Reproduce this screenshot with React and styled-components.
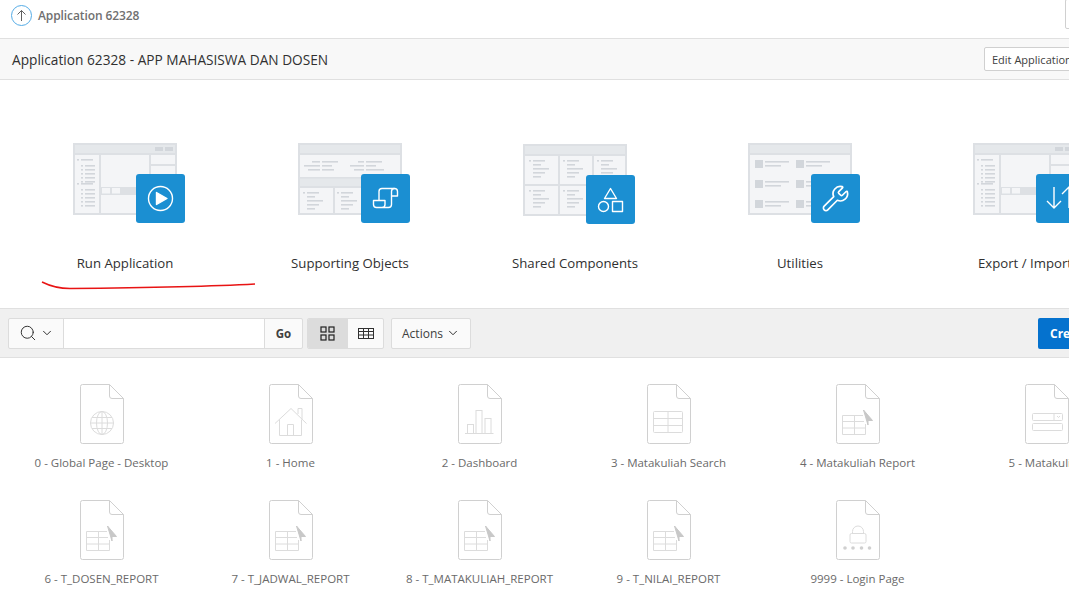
import React from "react";
import styled, { createGlobalStyle } from "styled-components";
import { Search, ChevronDown, Wrench } from "lucide-react";

const Global = createGlobalStyle`
  html, body { margin: 0; padding: 0; overflow: hidden; background: #fff; width: 1069px; height: 591px; }
  * { box-sizing: border-box; }
`;
const Page = styled.div`
  position: relative;
  width: 1150px;
  height: 591px;
  overflow: hidden;
  font-family: "Open Sans", "Noto Sans", sans-serif;
  color: #303030;
`;
const TopBar = styled.div`
  height: 39px;
  display: flex;
  align-items: flex-start;
  justify-content: space-between;
  padding: 0 12px 0 11px;
  border-bottom: 1px solid #e0e0e0;
`;
const Crumb = styled.div`
  display: flex;
  align-items: center;
  gap: 6px;
  height: 30px;
  font-size: 12px;
  font-weight: 600;
  color: #707070;
  letter-spacing: -0.1px;
`;
const UpCircle = styled.span`
  width: 21px;
  height: 21px;
  border: 1px solid #55ace6;
  border-radius: 50%;
  display: flex;
  align-items: center;
  justify-content: center;
`;
const TopButton = styled.div`
  width: 73px;
  height: 30px;
  margin-top: -1px;
  border: 1px solid #d0d0d0;
  border-radius: 2px;
`;
const Header = styled.div`
  height: 41px;
  display: flex;
  align-items: center;
  justify-content: space-between;
  padding: 0 12px;
  background: #f8f8f8;
  border-bottom: 1px solid #e0e0e0;
`;
const Title = styled.h1`
  margin: 1px 0 0;
  font-size: 13.7px;
  font-weight: 400;
  color: #303030;
`;
const EditButton = styled.div`
  height: 24px;
  width: 154px;
  display: flex;
  align-items: center;
  padding: 0 7px;
  white-space: nowrap;
  background: #fff;
  border: 1px solid #d0d0d0;
  border-radius: 2px;
  font-size: 11px;
  color: #404040;
`;
const Hero = styled.div`
  height: 228px;
  padding-top: 63px;
  display: grid;
  grid-template-columns: repeat(5, 225px);
  justify-content: center;
`;
const Tile = styled.div`
  display: flex;
  flex-direction: column;
  align-items: center;
`;
const Art = styled.div`
  position: relative;
  width: 104px;
  height: 80px;
  transform: translateY(${(p) => p.$drop || 0}px);
`;
const Badge = styled.div`
  position: absolute;
  left: 63px;
  top: 31px;
  width: 49px;
  height: 49px;
  border-radius: 3px;
  background: #1b8fd2;
  display: flex;
  align-items: center;
  justify-content: center;
  color: #fff;
`;
const TileLabel = styled.div`
  margin-top: 30px;
  line-height: 20px;
  font-size: 13.2px;
  color: #303030;
  white-space: nowrap;
`;
const Toolbar = styled.div`
  height: 50px;
  padding: 0 8px;
  display: flex;
  align-items: center;
  background: #f0f0f0;
  border-top: 1px solid #e0e0e0;
  border-bottom: 1px solid #e0e0e0;
`;
const Group = styled.div`
  display: flex;
  height: 31px;
  border: 1px solid #dcdcdc;
  border-radius: 2px;
  background: #fafafa;
  margin-right: ${(p) => p.$gap || 0}px;
  overflow: hidden;
`;
const Segment = styled.div`
  width: ${(p) => p.$w}px;
  display: flex;
  align-items: center;
  justify-content: center;
  gap: 3px;
  color: #404040;
  background: ${(p) => (p.$active ? "#dcdcdc" : "transparent")};
  border-left: ${(p) => (p.$sep ? "1px solid #dcdcdc" : "none")};
  font-size: 12px;
`;
const SearchInput = styled.div`
  width: 201px;
  background: #fff;
  border-left: 1px solid #dcdcdc;
`;
const Go = styled(Segment)`
  font-weight: 700;
  font-size: 11.5px;
`;
const Spacer = styled.div`
  flex: 1;
`;
const CreateButton = styled.div`
  width: 104px;
  height: 31px;
  padding-left: 12px;
  display: flex;
  align-items: center;
  background: #0572ce;
  border-radius: 2px;
  color: #fff;
  font-size: 12px;
  font-weight: 700;
  white-space: nowrap;
`;
const PageGrid = styled.div`
  padding: 26px 7px 0;
  display: grid;
  grid-template-columns: repeat(6, 189px);
  grid-auto-rows: 116px;
`;
const PageCell = styled.div`
  display: flex;
  flex-direction: column;
  align-items: center;
`;
const PageLabel = styled.div`
  margin-top: 11px;
  line-height: 16px;
  font-size: 11.5px;
  color: #6a6a6a;
  white-space: nowrap;
`;
const RedMark = styled.svg`
  position: absolute;
  left: 0;
  top: 0;
  pointer-events: none;
`;

const EDGE = "#dde0e4";
const BAND = "#e5e8eb";
const FILL = "#f4f5f7";
const INK = "#d2d6db";

const R = ({ x, y, w, h, c = INK }) => <rect x={x} y={y} width={w} height={h} fill={c} />;

const Frame = ({ children }) => (
  <svg width="104" height="72" viewBox="0 0 104 72" style={{ display: "block" }}>
    <R x={0} y={0} w={104} h={72} c={EDGE} />
    <R x={2} y={2} w={100} h={68} c={FILL} />
    <R x={2} y={2} w={100} h={8} c={BAND} />
    <R x={2} y={10} w={100} h={2} c={EDGE} />
    {children}
  </svg>
);

const RunArt = () => (
  <Frame>
    <R x={82} y={4} w={8} h={4} c={INK} />
    <R x={92} y={4} w={8} h={4} c={INK} />
    <R x={26} y={12} w={2} h={58} c={EDGE} />
    <R x={76} y={12} w={2} h={58} c={EDGE} />
    <R x={78} y={21} w={24} h={2} c={EDGE} />
    <R x={28} y={44} w={48} h={8} c={EDGE} />
    <R x={29} y={45} w={8} h={5.5} c={FILL} />
    <R x={39} y={45} w={8} h={5.5} c={FILL} />
    {[16, 40].map((y0) => (
      <g key={y0}>
        <R x={4} y={y0} w={2} h={1.6} />
        <R x={8} y={y0} w={12} h={1.6} />
        {[6, 10, 14, 18, 22].map((d) => (
          <g key={d}>
            <R x={8} y={y0 + d} w={2} h={1.6} />
            <R x={12} y={y0 + d} w={10} h={1.6} />
          </g>
        ))}
      </g>
    ))}
  </Frame>
);

const ObjectsArt = () => (
  <Frame>
    <R x={2} y={34} w={100} h={10} c={BAND} />
    <R x={2} y={34} w={100} h={1.6} c={EDGE} />
    <R x={2} y={43} w={100} h={2} c={EDGE} />
    <R x={35} y={44} w={2} h={26} c={EDGE} />
    <R x={14} y={18} w={8} h={1.6} /><R x={24} y={18} w={16} h={1.6} />
    <R x={6} y={22} w={16} h={1.6} /><R x={24} y={22} w={10} h={1.6} />
    <R x={10} y={26} w={12} h={1.6} /><R x={24} y={26} w={12} h={1.6} />
    <R x={60} y={18} w={6} h={1.6} /><R x={68} y={18} w={16} h={1.6} />
    <R x={52} y={22} w={14} h={1.6} /><R x={68} y={22} w={10} h={1.6} />
    <R x={56} y={26} w={10} h={1.6} /><R x={68} y={26} w={18} h={1.6} />
    <R x={5} y={49} w={2} h={1.6} />
    <R x={9} y={49} w={12} h={1.6} /><R x={9} y={53} w={8} h={1.6} /><R x={9} y={57} w={16} h={1.6} /><R x={9} y={61} w={12} h={1.6} /><R x={9} y={65} w={8} h={1.6} />
    <R x={39} y={49} w={2} h={1.6} />
    <R x={43} y={49} w={12} h={1.6} /><R x={43} y={53} w={8} h={1.6} /><R x={43} y={57} w={16} h={1.6} /><R x={43} y={61} w={12} h={1.6} /><R x={43} y={65} w={8} h={1.6} />
  </Frame>
);

const SharedArt = () => (
  <Frame>
    <R x={35} y={12} w={2} h={58} c={EDGE} />
    <R x={69} y={12} w={2} h={58} c={EDGE} />
    <R x={2} y={40} w={100} h={2} c={EDGE} />
    {[6, 40, 74].map((x) =>
      [16, 46].map((y) => (
        <g key={`${x}-${y}`}>
          <R x={x} y={y} w={2} h={1.6} />
          <R x={x + 4} y={y} w={12} h={1.6} />
          <R x={x + 4} y={y + 4} w={8} h={1.6} />
          <R x={x + 4} y={y + 8} w={16} h={1.6} />
          <R x={x + 4} y={y + 12} w={12} h={1.6} />
          <R x={x + 4} y={y + 16} w={8} h={1.6} />
        </g>
      ))
    )}
  </Frame>
);

const UtilitiesArt = () => (
  <Frame>
    {[7, 48].map((x) =>
      [17, 37, 57].map((y) => (
        <g key={`${x}-${y}`}>
          <R x={x} y={y} w={8} h={8} />
          <R x={x + 10} y={y + 1} w={24} h={1.6} />
          <R x={x + 10} y={y + 5} w={16} h={1.6} />
        </g>
      ))
    )}
  </Frame>
);

const BadgeSvg = ({ children }) => (
  <svg width="49" height="49" viewBox="0 0 49 49" fill="none" stroke="#fff" strokeWidth="1.4" strokeLinejoin="round">
    {children}
  </svg>
);

const PlayIcon = () => (
  <BadgeSvg>
    <circle cx="24.5" cy="24.5" r="12" />
    <path d="M20.5 18.5L31 24.5L20.5 30.5Z" fill="#fff" />
  </BadgeSvg>
);
const ScrollIcon = () => (
  <BadgeSvg>
    <path d="M21 14.5h12.5a3 3 0 0 1 3 3v4.5h-5.5" />
    <path d="M33.5 14.5a3 3 0 0 0-3 3V30.5a3 3 0 0 1-3 3H15.5a3 3 0 0 1-3-3V26.5H24V30.5a3 3 0 0 1-3 3" />
    <path d="M21 14.5a3 3 0 0 0-3 3V26.5" />
  </BadgeSvg>
);
const ShapesIcon = () => (
  <BadgeSvg>
    <path d="M24.5 13.5L30.5 23.5H18.5Z" />
    <circle cx="17.5" cy="31.5" r="5" />
    <rect x="26.5" y="26.5" width="10" height="10" />
  </BadgeSvg>
);
const ArrowsIcon = () => (
  <BadgeSvg>
    <path d="M18 13V34M11 27l7 7l7-7" />
    <path d="M33 34V13M26 20l7-7l7 7" />
  </BadgeSvg>
);

const tiles = [
  { label: "Run Application", Art: RunArt, icon: <PlayIcon /> },
  { label: "Supporting Objects", Art: ObjectsArt, icon: <ScrollIcon /> },
  { label: "Shared Components", Art: SharedArt, icon: <ShapesIcon />, drop: 1 },
  { label: "Utilities", Art: UtilitiesArt, icon: <Wrench size={29} strokeWidth={1.4} /> },
  { label: "Export / Import", Art: RunArt, icon: <ArrowsIcon /> },
];

const S = "#dcdcdc";
const Doc = ({ children }) => (
  <svg width="44" height="60" viewBox="0 0 44 60" fill="none" stroke={S} strokeWidth="1" style={{ display: "block" }}>
    <path d="M2.5.5H29.5L43.5 14.5V57.5a2 2 0 0 1-2 2H2.5a2 2 0 0 1-2-2V2.5a2 2 0 0 1 2-2z" stroke="#d0d0d0" />
    <path d="M29.5.5V12a2.5 2.5 0 0 0 2.5 2.5H43.5" stroke="#d0d0d0" />
    {children}
  </svg>
);
const TableGlyph = () => (
  <g>
    <rect x="6.5" y="27.5" width="29" height="21" rx="1" />
    <path d="M6.5 34.5H35.5M6.5 41.5H35.5M21 27.5V48.5" />
  </g>
);
const GlobeGlyph = () => (
  <g>
    <circle cx="22" cy="39" r="11.5" />
    <ellipse cx="22" cy="39" rx="5.5" ry="11.5" />
    <path d="M22 27.5V50.5M10.5 39H33.5M12 33.5H32M12 44.5H32" />
  </g>
);
const HomeGlyph = () => (
  <g>
    <path d="M6 39.5L22 24.5L37.5 39.5" />
    <path d="M10.5 35.5V51.5H32.5V35.5" />
    <path d="M18.5 51.5V40.5H24.5V51.5" />
    <path d="M29 30V24.5H33V35" />
  </g>
);
const ChartGlyph = () => (
  <g>
    <path d="M7 49.5H35.5" />
    <rect x="9.5" y="40.5" width="6" height="9" />
    <rect x="18" y="26.5" width="6" height="23" />
    <rect x="27" y="34.5" width="6" height="15" />
  </g>
);
const ReportGlyph = () => (
  <g>
    <path d="M27 31.5H6.5V50.5H29.5V40" />
    <path d="M6.5 37.5H28M6.5 44H29.5M18.5 31.5V50.5" />
    <path d="M27.5 26L36.5 36.5H32L32 41Z" fill="#c8c8c8" stroke="#c8c8c8" />
  </g>
);
const FormGlyph = () => (
  <g>
    <rect x="7.5" y="29.5" width="30" height="7" rx="1" />
    <path d="M29 29.5V36.5" />
    <path d="M32 32l1.5 1.5L35 32" />
    <rect x="7.5" y="39.5" width="30" height="7" rx="1" />
  </g>
);
const LockGlyph = () => (
  <g>
    <rect x="14" y="33.5" width="16" height="9.5" rx="1.5" />
    <path d="M16.5 33.5V31.5a5.5 5.5 0 0 1 11 0V33.5" />
    <g fill="#d0d0d0" stroke="none">
      <circle cx="9" cy="48" r="1.8" />
      <circle cx="17" cy="48" r="1.8" />
      <circle cx="25.5" cy="48" r="1.8" />
      <circle cx="33.5" cy="48" r="1.8" />
    </g>
  </g>
);

const pages = [
  ["0 - Global Page - Desktop", <GlobeGlyph />],
  ["1 - Home", <HomeGlyph />],
  ["2 - Dashboard", <ChartGlyph />],
  ["3 - Matakuliah Search", <TableGlyph />],
  ["4 - Matakuliah Report", <ReportGlyph />],
  ["5 - Matakuliah", <FormGlyph />],
  ["6 - T_DOSEN_REPORT", <ReportGlyph />],
  ["7 - T_JADWAL_REPORT", <ReportGlyph />],
  ["8 - T_MATAKULIAH_REPORT", <ReportGlyph />],
  ["9 - T_NILAI_REPORT", <ReportGlyph />],
  ["9999 - Login Page", <LockGlyph />],
];

export default function App() {
  return (
    <Page>
      <Global />
      <TopBar>
        <Crumb>
          <UpCircle>
            <svg width="13" height="13" viewBox="0 0 13 13" fill="none" stroke="#606060" strokeWidth="1">
              <path d="M6.5 12V1.5M2.5 5.5l4-4l4 4" />
            </svg>
          </UpCircle>
          Application 62328
        </Crumb>
        <TopButton />
      </TopBar>
      <Header>
        <Title>Application 62328 - APP MAHASISWA DAN DOSEN</Title>
        <EditButton>Edit Application Properties</EditButton>
      </Header>
      <Hero>
        {tiles.map(({ label, Art: Drawing, icon, drop }) => (
          <Tile key={label}>
            <Art $drop={drop}>
              <Drawing />
              <Badge>{icon}</Badge>
            </Art>
            <TileLabel>{label}</TileLabel>
          </Tile>
        ))}
      </Hero>
      <Toolbar>
        <Group $gap={4}>
          <Segment $w={54}>
            <Search size={18} strokeWidth={1.3} color="#303030" />
            <ChevronDown size={14} strokeWidth={1.7} color="#303030" />
          </Segment>
          <SearchInput />
          <Go $w={38} $sep>Go</Go>
        </Group>
        <Group $gap={7}>
          <Segment $w={39} $active>
            <svg width="15" height="15" viewBox="0 0 15 15" fill="none" stroke="#202020" strokeWidth="1.2">
              <rect x="1" y="1" width="5" height="5" />
              <rect x="9" y="1" width="5" height="5" />
              <rect x="1" y="9" width="5" height="5" />
              <rect x="9" y="9" width="5" height="5" />
            </svg>
          </Segment>
          <Segment $w={36} $sep>
            <svg width="16" height="11" viewBox="0 0 16 11" fill="none" stroke="#303030" strokeWidth="1">
              <rect x=".5" y=".5" width="15" height="10" />
              <path d="M.5 3.5H15.5M.5 7H15.5M5.5.5V10.5M10.5.5V10.5" />
            </svg>
          </Segment>
        </Group>
        <Group>
          <Segment $w={78}>
            Actions
            <ChevronDown size={14} strokeWidth={1.7} color="#303030" />
          </Segment>
        </Group>
        <Spacer />
        <CreateButton>Create Page</CreateButton>
      </Toolbar>
      <PageGrid>
        {pages.map(([label, glyph]) => (
          <PageCell key={label}>
            <Doc>{glyph}</Doc>
            <PageLabel>{label}</PageLabel>
          </PageCell>
        ))}
      </PageGrid>
      <RedMark width="1069" height="591" viewBox="0 0 1069 591" fill="none">
        <path d="M42 282C50 286 58 288.5 70 288.5C120 288 200 287 255 284" stroke="#e81414" strokeWidth="1.4" />
      </RedMark>
    </Page>
  );
}
